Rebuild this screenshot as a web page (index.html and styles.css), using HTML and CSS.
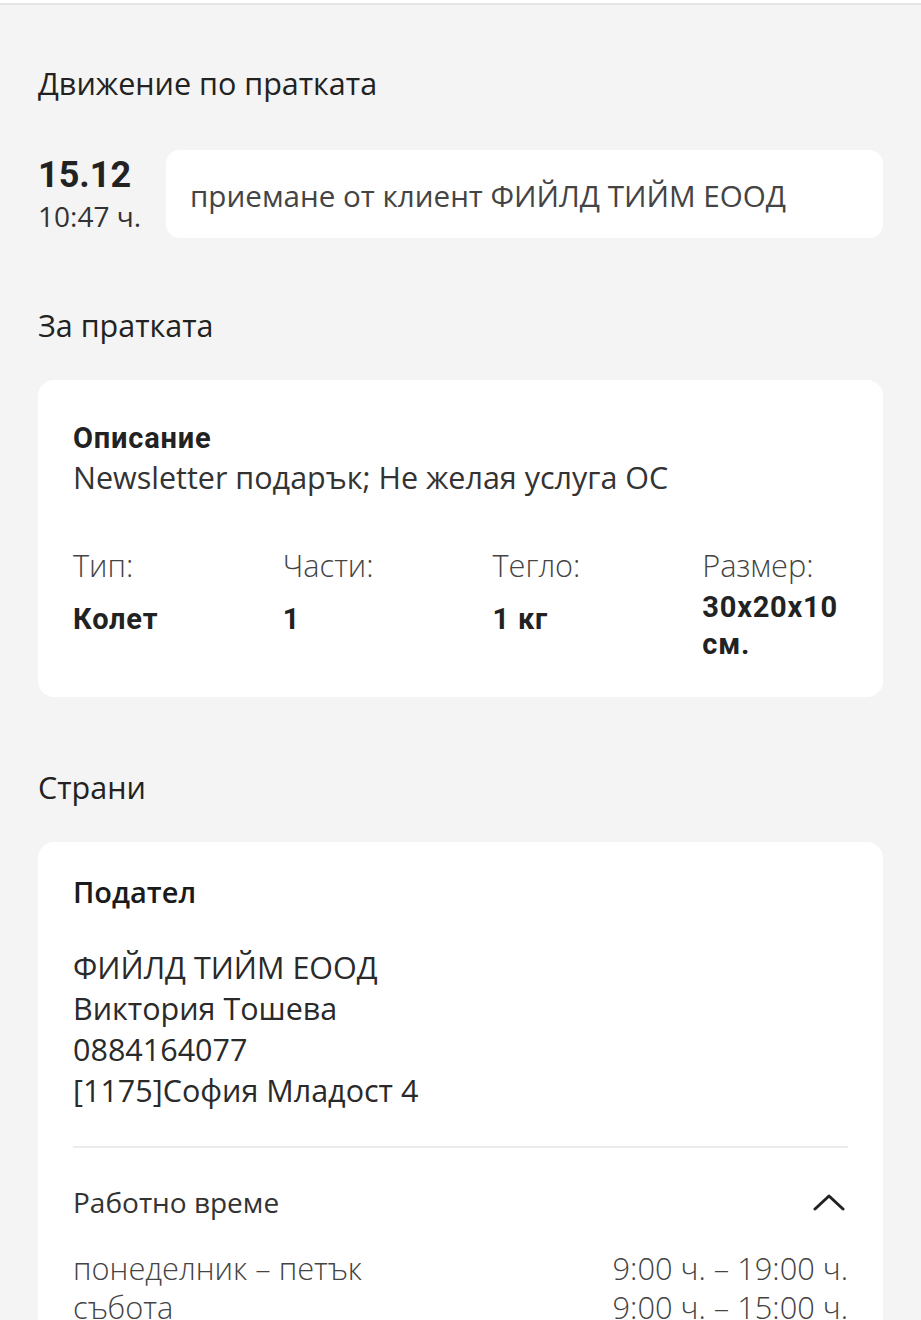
FILE: index.html
```html
<!DOCTYPE html>
<html lang="bg">
<head>
<meta charset="utf-8">
<title>Пратка</title>
<link rel="stylesheet" href="styles.css">
</head>
<body>
<div class="topbar"></div>
<main class="page">
  <h2 class="section-title first">Движение по пратката</h2>
  <div class="event">
    <div class="event-date">
      <div class="date">15.12</div>
      <div class="time">10:47 ч.</div>
    </div>
    <div class="event-card">приемане от клиент ФИЙЛД ТИЙМ ЕООД</div>
  </div>

  <h2 class="section-title">За пратката</h2>
  <section class="card card-info">
    <div class="desc-label">Описание</div>
    <div class="desc-text">Newsletter подарък; Не желая услуга ОС</div>
    <div class="specs">
      <div class="spec">
        <div class="spec-label">Тип:</div>
        <div class="spec-value">Колет</div>
      </div>
      <div class="spec">
        <div class="spec-label">Части:</div>
        <div class="spec-value">1</div>
      </div>
      <div class="spec">
        <div class="spec-label">Тегло:</div>
        <div class="spec-value">1 кг</div>
      </div>
      <div class="spec">
        <div class="spec-label">Размер:</div>
        <div class="spec-value multi">30x20x10 см.</div>
      </div>
    </div>
  </section>

  <h2 class="section-title">Страни</h2>
  <section class="card card-party">
    <div class="party-title">Подател</div>
    <div class="party-lines">
      <div>ФИЙЛД ТИЙМ ЕООД</div>
      <div>Виктория Тошева</div>
      <div>0884164077</div>
      <div>[1175]София Младост 4</div>
    </div>
    <div class="divider"></div>
    <div class="hours-head">
      <span>Работно време</span>
      <svg class="chevron" width="32" height="18" viewBox="0 0 32 18" aria-hidden="true">
        <path d="M2 16 L16 3 L30 16" fill="none" stroke="#222" stroke-width="3" stroke-linecap="round" stroke-linejoin="round"/>
      </svg>
    </div>
    <div class="hours">
      <div class="hours-row"><span>понеделник – петък</span><span>9:00 ч. – 19:00 ч.</span></div>
      <div class="hours-row"><span>събота</span><span>9:00 ч. – 15:00 ч.</span></div>
    </div>
  </section>
</main>
</body>
</html>
```
FILE: styles.css
```css
html, body {
  margin: 0;
  padding: 0;
  background: #f4f4f4;
}
body {
  font-family: "Open Sans", "Noto Sans", sans-serif;
  color: #222;
  overflow: hidden;
}
.topbar {
  height: 3px;
  background: #fff;
  border-bottom: 2px solid #e4e4e4;
}
.page {
  padding: 0 38px;
}
.section-title {
  margin: 0;
  font-size: 30.5px;
  line-height: 40px;
  font-weight: 400;
  color: #222;
}
.section-title.first {
  margin-top: 58px;
  margin-bottom: 47px;
}
.event {
  display: flex;
  align-items: center;
  gap: 24px;
  margin-bottom: 67px;
}
.event-date {
  width: 104px;
}
.date {
  font-family: Roboto, sans-serif;
  font-weight: 700;
  font-size: 36px;
  line-height: 44px;
  color: #222;
}
.time {
  font-size: 28px;
  line-height: 38px;
  color: #333;
}
.event-card {
  flex: 1;
  background: #fff;
  border-radius: 14px;
  padding: 26px 24px 22px;
  font-size: 29.6px;
  line-height: 40px;
  color: #444;
}
.section-title + .card {
  margin-top: 35px;
}
.card {
  background: #fff;
  border-radius: 16px;
  padding: 0 35px;
}
.card-info {
  padding-top: 39px;
  padding-bottom: 34px;
  margin-bottom: 70px;
}
.desc-label {
  font-family: Roboto, sans-serif;
  font-weight: 700;
  font-size: 29px;
  letter-spacing: 0.8px;
  line-height: 38px;
  color: #222;
}
.desc-text {
  font-size: 30.5px;
  line-height: 40px;
  color: #333;
}
.specs {
  display: grid;
  grid-template-columns: repeat(4, 1fr);
  column-gap: 64px;
  margin-top: 48px;
}
.spec-label {
  font-size: 30.7px;
  line-height: 40px;
  font-weight: 300;
  color: #444;
}
.spec-value {
  margin-top: 4px;
  padding-top: 12px;
  font-family: Roboto, sans-serif;
  font-weight: 700;
  font-size: 29px;
  letter-spacing: 0.8px;
  line-height: 37px;
  color: #222;
}
.spec-value.multi {
  padding-top: 0;
}
.card-party {
  padding-top: 30px;
  padding-bottom: 40px;
}
.party-title {
  font-size: 29px;
  line-height: 40px;
  font-weight: 600;
  color: #1a1a1a;
}
.party-lines {
  margin-top: 35px;
  font-size: 30.5px;
  line-height: 41px;
  color: #2a2a2a;
}
.divider {
  height: 2px;
  background: #ebebeb;
  margin-top: 35px;
}
.hours-head {
  display: flex;
  justify-content: space-between;
  align-items: center;
  margin-top: 34px;
  font-size: 28px;
  line-height: 40px;
  color: #333;
}
.chevron {
  margin-right: 3px;
}
.hours {
  margin-top: 27px;
  font-size: 30.8px;
  line-height: 39px;
  font-weight: 300;
  color: #444;
}
.hours-row {
  display: flex;
  justify-content: space-between;
}
```
